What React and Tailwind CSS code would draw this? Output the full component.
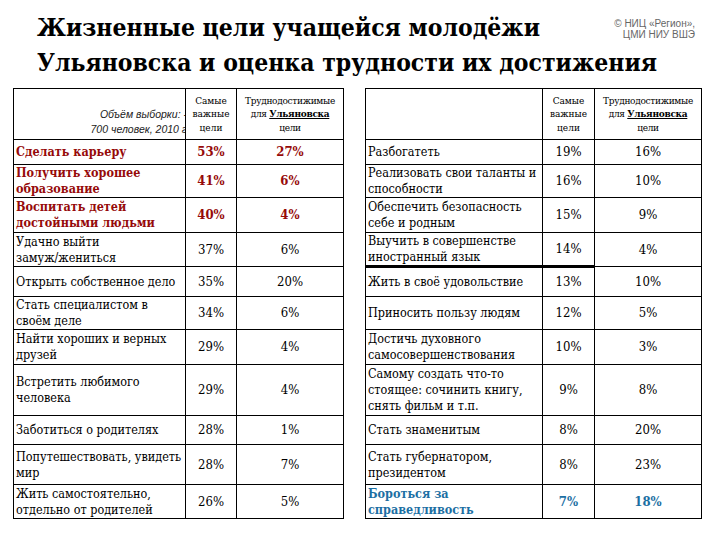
import React from "react";

const leftRows = [
	{ t: ["Сделать карьеру"], a: "53%", b: "27%", tone: "red", h: 25 },
	{ t: ["Получить хорошее", "образование"], a: "41%", b: "6%", tone: "red", h: 33 },
	{ t: ["Воспитать детей", "достойными людьми"], a: "40%", b: "4%", tone: "red", h: 35 },
	{ t: ["Удачно выйти", "замуж/жениться"], a: "37%", b: "6%", h: 34 },
	{ t: ["Открыть собственное дело"], a: "35%", b: "20%", h: 30 },
	{ t: ["Стать специалистом в", "своём деле"], a: "34%", b: "6%", h: 33 },
	{ t: ["Найти хороших и верных", "друзей"], a: "29%", b: "4%", h: 35 },
	{ t: ["Встретить любимого", "человека"], a: "29%", b: "4%", h: 51 },
	{ t: ["Заботиться о родителях"], a: "28%", b: "1%", h: 29 },
	{ t: ["Попутешествовать, увидеть", "мир"], a: "28%", b: "7%", h: 40 },
	{ t: ["Жить самостоятельно,", "отдельно от родителей"], a: "26%", b: "5%", h: 34 },
];

const rightRows = [
	{ t: ["Разбогатеть"], a: "19%", b: "16%", h: 25 },
	{ t: ["Реализовать свои таланты и", "способности"], a: "16%", b: "10%", h: 33 },
	{ t: ["Обеспечить безопасность", "себе и родным"], a: "15%", b: "9%", h: 35 },
	{ t: ["Выучить в совершенстве", "иностранный язык"], a: "14%", b: "4%", h: 34, thick: true },
	{ t: ["Жить в своё удовольствие"], a: "13%", b: "10%", h: 30 },
	{ t: ["Приносить пользу людям"], a: "12%", b: "5%", h: 33 },
	{ t: ["Достичь духовного", "самосовершенствования"], a: "10%", b: "3%", h: 35 },
	{ t: ["Самому создать что-то", "стоящее: сочинить книгу,", "снять фильм и т.п."], a: "9%", b: "8%", h: 51 },
	{ t: ["Стать знаменитым"], a: "8%", b: "20%", h: 29 },
	{ t: ["Стать губернатором,", "президентом"], a: "8%", b: "23%", h: 40 },
	{ t: ["Бороться за", "справедливость"], a: "7%", b: "18%", tone: "blue", h: 34 },
];

const toneClass = (tone) => {
	if (tone === "red") return "text-[#960a0a] font-bold";
	if (tone === "blue") return "text-[#1c6fa3] font-bold";
	return "text-black";
};

const HeadCols = () => (
	<>
		<th className="border border-black font-normal text-[10px] leading-[13.5px] text-center align-middle">
			Самые
			<br />
			важные
			<br />
			цели
		</th>
		<th className="border border-black font-normal text-[10px] leading-[13.5px] text-center align-middle tracking-[-0.3px]">
			Труднодостижимые
			<br />
			для <span className="font-bold underline">Ульяновска</span>
			<br />
			цели
		</th>
	</>
);

const GoalTable = ({ rows, widths, intro }) => (
	<table className="table-fixed border-collapse font-['DejaVu_Serif_Condensed','DejaVu_Serif',serif]">
		<colgroup>
			<col className={widths[0]} />
			<col className={widths[1]} />
			<col className={widths[2]} />
		</colgroup>
		<thead>
			<tr className="h-[51px]">
				<th className="border border-black font-normal align-bottom p-0 overflow-hidden">
					{intro && (
						<div className="text-right whitespace-nowrap font-['Liberation_Sans',Arial,sans-serif] italic text-[10.5px] leading-[15px] mr-[-2px] pb-[2px] text-[#222]">
							Объём выборки: -
							<br />
							700 человек, 2010 г
						</div>
					)}
				</th>
				<HeadCols />
			</tr>
		</thead>
		<tbody>
			{rows.map((r) => (
				<tr key={r.t[0]} style={{ height: r.h }}>
					<td
						className={`border border-black pl-[2px] pr-0 py-0 align-middle text-[12.5px] leading-[16px] whitespace-nowrap ${toneClass(r.tone)} ${r.thick ? "border-b-[3px]" : ""}`}
					>
						{r.t.map((line, i) => (
							<div key={i}>{line}</div>
						))}
					</td>
					<td
						className={`border border-black text-center align-middle text-[13px] ${toneClass(r.tone)} ${r.thick ? "border-b-[3px]" : ""}`}
					>
						{r.a}
					</td>
					<td className={`border border-black text-center align-middle text-[13px] ${toneClass(r.tone)}`}>
						{r.b}
					</td>
				</tr>
			))}
		</tbody>
	</table>
);

const App = () => {
	return (
		<div className="w-[720px] h-[540px] bg-white overflow-hidden">
			<div className="pl-[37px] pt-[10px] font-['DejaVu_Serif_Condensed','DejaVu_Serif',serif] font-bold text-[24.5px] leading-[35px] text-black whitespace-nowrap">
				<div className="flex items-start">
					<h1 className="flex-1 text-[24.5px] font-bold">Жизненные цели учащейся молодёжи</h1>
					<div className="pt-[9px] pr-[25px] text-right font-['Liberation_Sans',Arial,sans-serif] font-normal text-[10px] leading-[10.5px] text-[#666]">
						© НИЦ «Регион»,
						<br />
						ЦМИ НИУ ВШЭ
					</div>
				</div>
				<div>Ульяновска и оценка трудности их достижения</div>
			</div>
			<div className="flex gap-[21px] pl-[13px] mt-[8px]">
				<GoalTable rows={leftRows} widths={["w-[172px]", "w-[51px]", "w-[107px]"]} intro />
				<GoalTable rows={rightRows} widths={["w-[177px]", "w-[52px]", "w-[107px]"]} />
			</div>
		</div>
	);
};

export default App;
